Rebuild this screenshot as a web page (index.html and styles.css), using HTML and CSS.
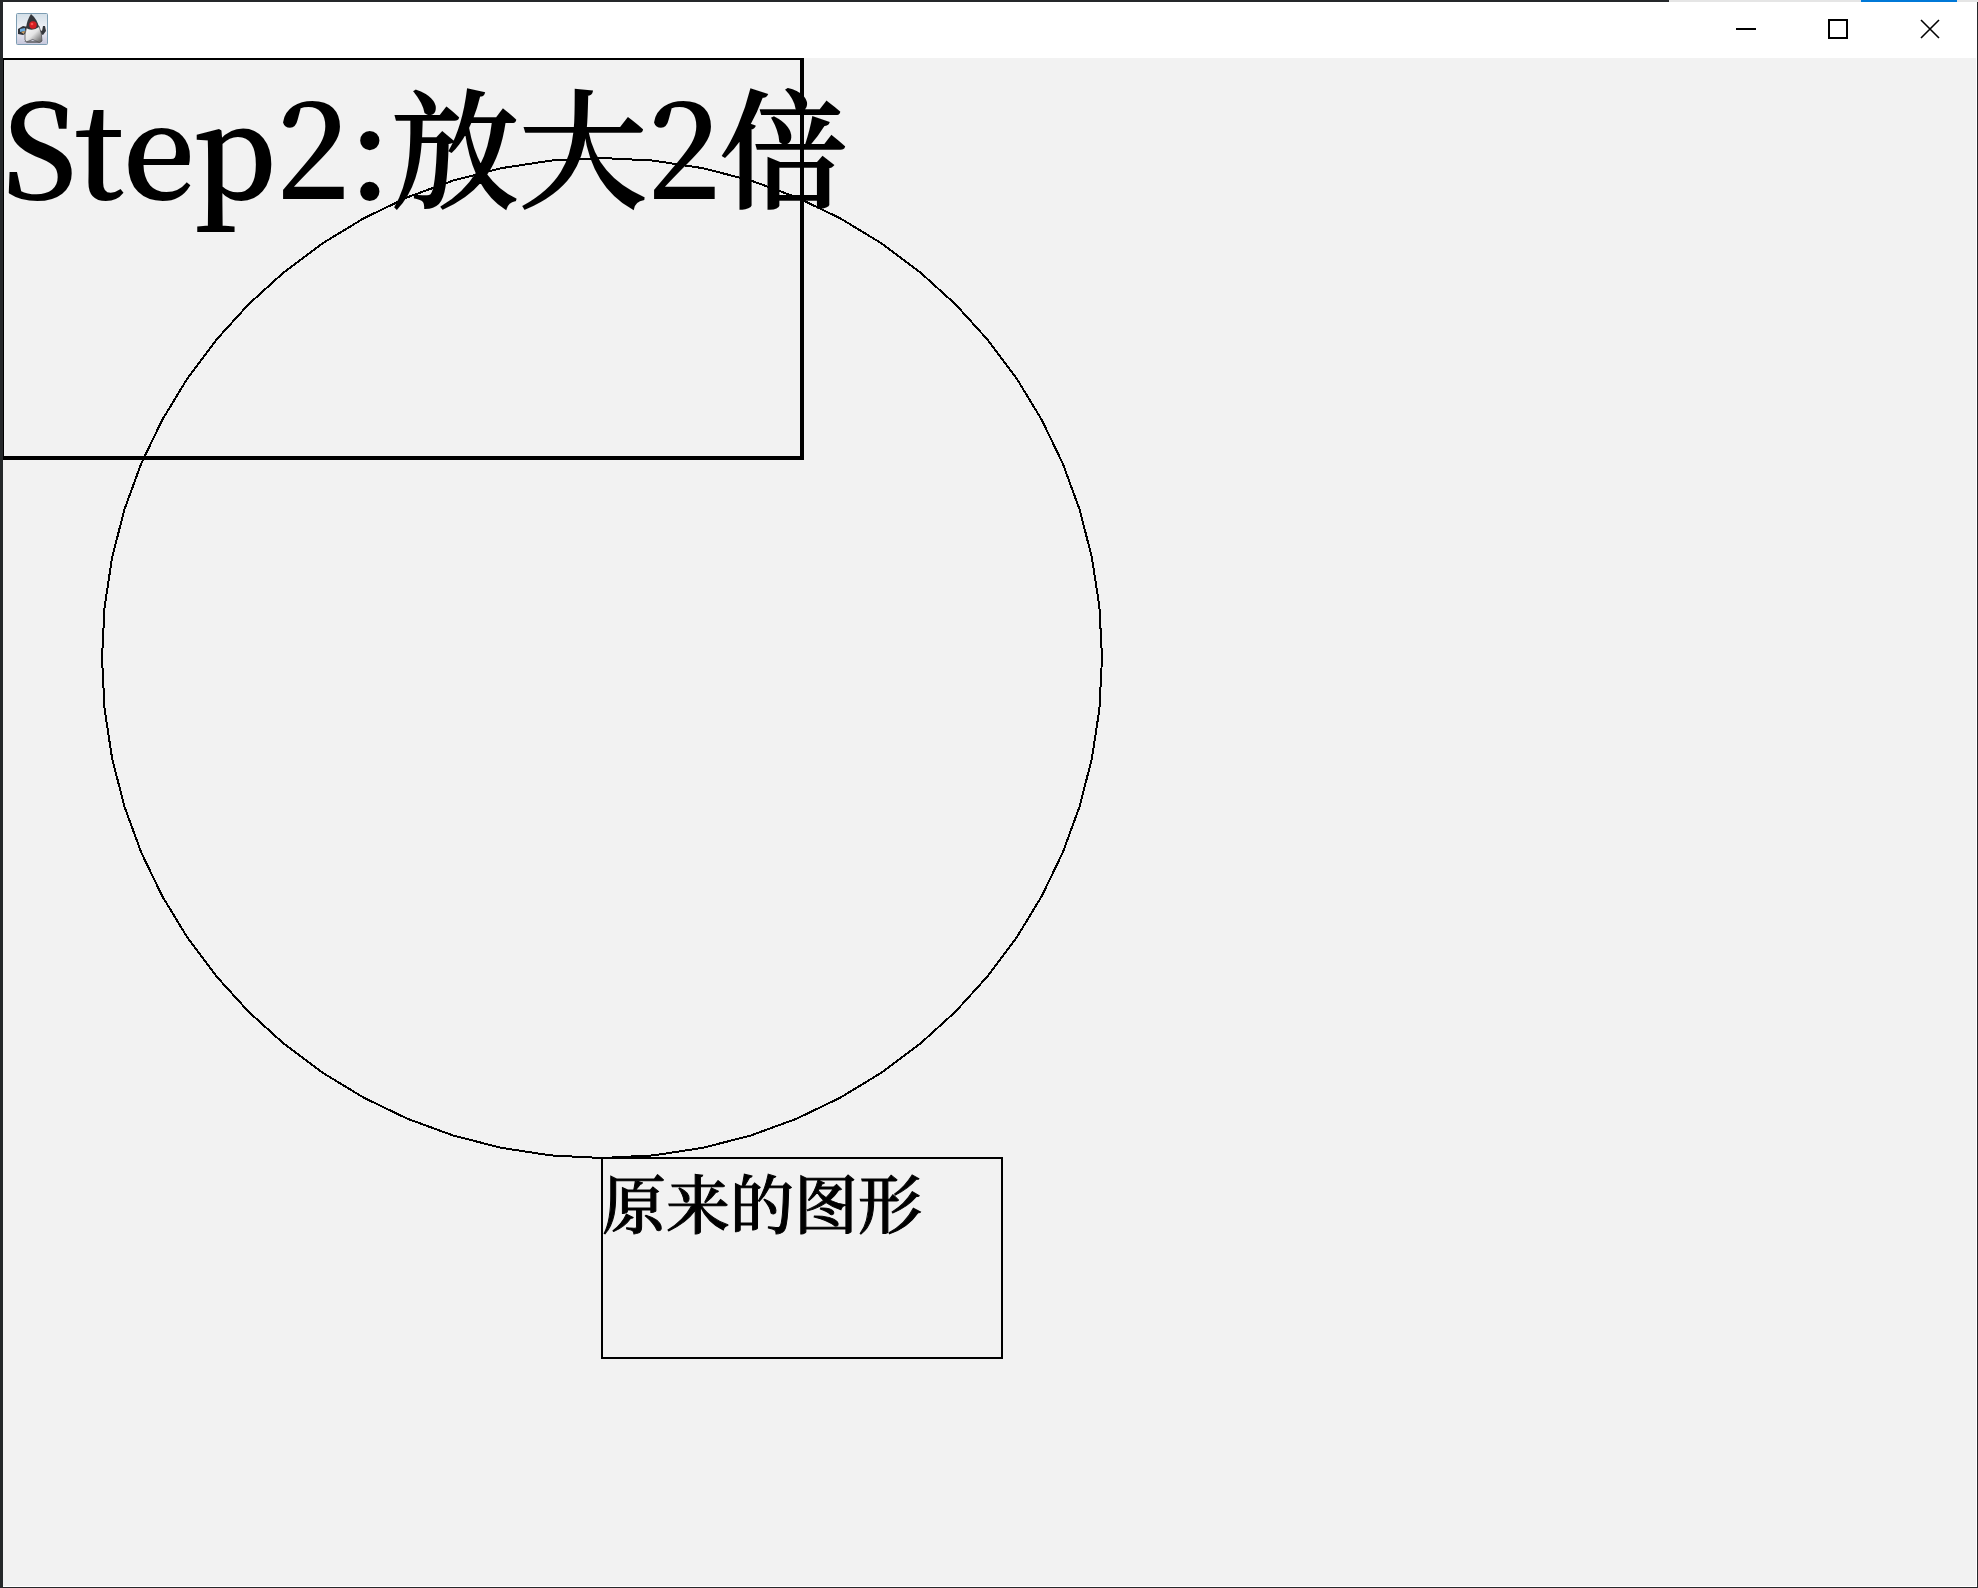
FILE: index.html
```
<!DOCTYPE html>
<html lang="zh-CN">
<head>
<meta charset="utf-8">
<title>Java</title>
<link rel="stylesheet" href="styles.css">
</head>
<body>
<div class="desktop-edge"><span class="edge-light"></span><span class="edge-blue"></span><span class="edge-end"></span></div>
<div class="window">
  <header class="titlebar">
    <svg class="duke" viewBox="0 0 32 32" aria-hidden="true">
      <defs>
        <linearGradient id="tile" x1="0" y1="0" x2="0" y2="1"><stop offset="0" stop-color="#d3dfe8"/><stop offset=".5" stop-color="#f1f2f7"/><stop offset="1" stop-color="#c6c7dc"/></linearGradient>
        <linearGradient id="body" x1="0" y1="0" x2="1" y2="1"><stop offset="0" stop-color="#fff"/><stop offset=".5" stop-color="#e4e4e4"/><stop offset="1" stop-color="#555"/></linearGradient>
      </defs>
      <rect x=".5" y=".5" width="31" height="31" rx="1" fill="url(#tile)" stroke="#7d9db3"/>
      <path d="M8 28h18l-3 2H11z" fill="#77777f"/>
      <path d="M12 14L7 13L2 16L2 21L7 22L11 20" fill="#303238"/>
      <path d="M4 16l5-1v3l-5 1z" fill="#6babdd"/><path d="M5 19l4-1-1 3z" fill="#d5a869"/>
      <path d="M22 16l4 2 1-5h2l1 5-3 4-4-2" fill="#34363b"/>
      <path d="M11 13Q8 22 9 27Q10 30 13 28Q17 25 20 28Q24 31 26 28Q26 20 23 13Z" fill="url(#body)" stroke="#55565a" stroke-width=".8"/>
      <path d="M15 1Q11 7 10 15Q16 19 23 14Q21 6 15 1Z" fill="#35363b"/>
      <circle cx="17" cy="12" r="3.7" fill="#d51d23"/><circle cx="16" cy="11" r="1.3" fill="#fa5550"/>
    </svg>
    <div class="controls">
      <button type="button" aria-label="最小化"><svg viewBox="0 0 20 20"><path d="M0 10h20"/></svg></button>
      <button type="button" aria-label="最大化"><svg viewBox="0 0 20 20"><path d="M1 1h18v18H1z"/></svg></button>
      <button type="button" aria-label="关闭"><svg class="cross" viewBox="0 0 20 20"><path d="M1 1l18 18M19 1L1 19"/></svg></button>
    </div>
  </header>
  <main class="canvas">
    <svg class="circle" viewBox="0 0 1002 1002" aria-hidden="true"><polygon id="ring" points=""/></svg>
    <div class="frame scaled"></div>
    <div class="label label-scaled">Step2:放大2倍</div>
    <div class="frame original"></div>
    <div class="label label-original">原来的图形</div>
  </main>
</div>
<script src="circle.js"></script>
</body>
</html>
```
FILE: circle.js
```
// Each quarter of the circle is a cubic Bezier curve, flattened into 16 segments.
const K = 0.5523;
const STEPS = 16;
const points = [];
for (let quarter = 0; quarter < 4; quarter++) {
  for (let i = 0; i < STEPS; i++) {
    const t = i / STEPS;
    const u = 1 - t;
    let x = u * u * u + 3 * u * u * t + 3 * u * t * t * K;
    let y = 3 * u * u * t * K + 3 * u * t * t + t * t * t;
    for (let turn = 0; turn < quarter; turn++) [x, y] = [-y, x];
    points.push((501 + 500 * x).toFixed(2) + "," + (501 + 500 * y).toFixed(2));
  }
}
document.getElementById("ring").setAttribute("points", points.join(" "));
```
FILE: styles.css
```
* { box-sizing: border-box; }
body {
  margin: 0;
  min-height: 100vh;
  display: flex;
  flex-direction: column;
  background: #25282a;
  font-family: "Noto Serif CJK SC", "Source Han Serif SC", "Noto Sans CJK SC", serif;
  color: #000;
}
.desktop-edge { display: flex; justify-content: flex-end; height: 2px; }
.edge-light { width: 192px; background: #e5e5e5; }
.edge-blue { width: 96px; background: #0078d7; }
.edge-end { width: 21px; background: #e5e5e5; }
.window {
  flex: 1;
  display: flex;
  flex-direction: column;
  margin: 0 1px 1px 3px;
  background: #fff;
}
.titlebar {
  display: flex;
  justify-content: space-between;
  align-items: center;
  height: 56px;
  padding: 0 1px 0 13px;
}
.duke { width: 32px; height: 32px; margin-bottom: 2px; }
.controls { display: flex; height: 100%; }
.controls button {
  display: flex;
  align-items: center;
  justify-content: center;
  width: 92px;
  padding: 0;
  border: 0;
  background: none;
}
.controls svg { width: 20px; height: 20px; margin-bottom: 2px; fill: none; stroke: #000; stroke-width: 2; }
.controls .cross { stroke-width: 1.6; }
.canvas {
  position: relative;
  flex: 1;
  margin: 0 1px 1px 0;
  background: #f2f2f2;
}
.circle {
  position: absolute;
  left: 98px;
  top: 99px;
  width: 1002px;
  height: 1002px;
  fill: none;
  stroke: #000;
  stroke-width: 2;
  shape-rendering: crispEdges;
}
.frame { position: absolute; border: 2px solid #000; }
.scaled {
  left: 0;
  top: 0;
  width: 801px;
  height: 402px;
  border-width: 2px 4px 4px 1px;
}
.original {
  left: 598px;
  top: 1099px;
  width: 402px;
  height: 202px;
}
.label {
  position: absolute;
  font-weight: 500;
  white-space: nowrap;
  -webkit-text-stroke: 1px #000;
}
.label-scaled {
  left: 0;
  top: 0;
  font-size: 128px;
  line-height: 170px;
  -webkit-text-stroke-width: 2px;
}
.label-original {
  left: 599px;
  top: 1099px;
  font-size: 64px;
  line-height: 86px;
}
```
